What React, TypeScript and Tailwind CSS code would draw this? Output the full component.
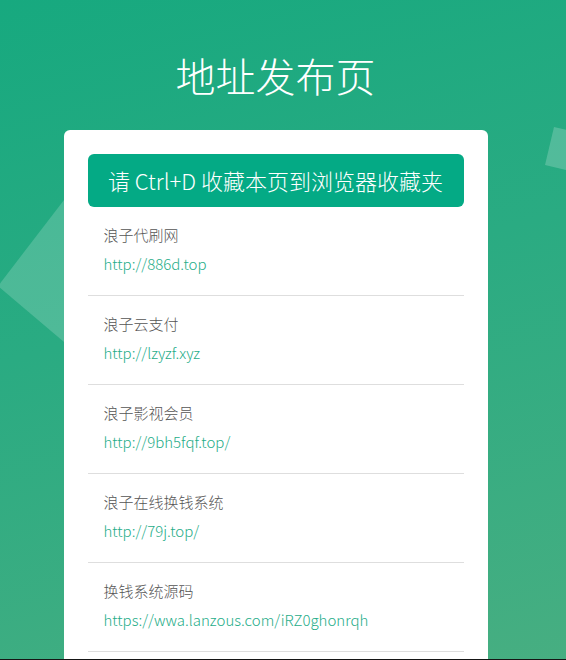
import React from "react";

const items = [
  { name: "浪子代刷网", url: "http://886d.top" },
  { name: "浪子云支付", url: "http://lzyzf.xyz" },
  { name: "浪子影视会员", url: "http://9bh5fqf.top/" },
  { name: "浪子在线换钱系统", url: "http://79j.top/" },
  { name: "换钱系统源码", url: "https://wwa.lanzous.com/iRZ0ghonrqh" },
];

const font = {
  fontFamily: '"Noto Sans CJK SC", "Noto Sans", sans-serif',
};

export default function App() {
  return (
    <div
      className="relative min-h-screen overflow-hidden bg-[linear-gradient(165deg,#17a97f_0%,#2aab82_40%,#4daf81_100%)]"
      style={font}
    >
      <svg
        className="absolute left-0 top-0"
        width="566"
        height="660"
        viewBox="0 0 566 660"
      >
        <polygon points="-2,286 64,200 64,342" fill="rgba(255,255,255,0.18)" />
        <polygon points="554,127 545,165 583,174 592,136" fill="rgba(255,255,255,0.2)" />
      </svg>
      <div className="relative w-[551px] pb-10">
        <h1 className="pt-[51px] text-center text-[40px] leading-[48px] font-light text-white">
          地址发布页
        </h1>
        <div className="mx-auto mt-[31px] w-[424px] rounded-md bg-white px-6 pt-6 pb-16">
          <div className="flex h-[53px] items-center justify-center rounded-md bg-[#04aa85] text-[22px] font-light text-white">
            请 Ctrl+D 收藏本页到浏览器收藏夹
          </div>
          <ul>
            {items.map((it) => (
              <li
                key={it.name}
                className="border-b border-[#dedede] px-4 pt-[17px] pb-[20px]"
              >
                <div className="text-[15px] leading-[22px] font-light text-[#555]">
                  {it.name}
                </div>
                <div className="mt-[7px] text-[15px] leading-[22px] font-light text-[#1fad89]">
                  {it.url}
                </div>
              </li>
            ))}
          </ul>
        </div>
      </div>
      <div className="fixed bottom-0 left-0 right-0 h-px bg-[#151515]" />
    </div>
  );
}
